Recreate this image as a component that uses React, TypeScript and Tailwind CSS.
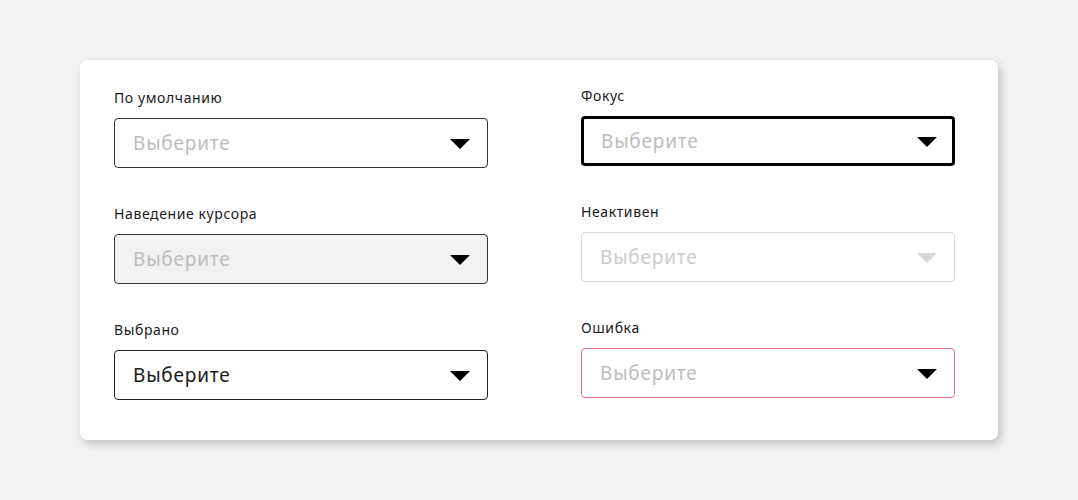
import React from "react";

type Variant = "default" | "focus" | "hover" | "disabled" | "selected" | "error";

const boxCls: Record<Variant, string> = {
  default: "border border-[#333333] bg-white",
  focus: "border-[3px] border-black bg-white",
  hover: "border border-[#333333] bg-[#f2f2f2]",
  disabled: "border border-[#d9d9d9] bg-white",
  selected: "border border-[#222222] bg-white",
  error: "border border-[#dc7882] bg-white",
};

const textCls: Record<Variant, string> = {
  default: "text-[#bdbdbd]",
  focus: "text-[#bdbdbd]",
  hover: "text-[#bdbdbd]",
  disabled: "text-[#cccccc]",
  selected: "text-[#1a1a1a]",
  error: "text-[#bdbdbd]",
};

function Field({ label, variant }: { label: string; variant: Variant }) {
  const arrow = variant === "disabled" ? "#d6d6d6" : "#000000";
  return (
    <div className="flex flex-col">
      <div className="h-[20px] text-[14px] tracking-[0.6px] leading-[20px] text-[#1a1a1a]">{label}</div>
      <div
        className={`mt-[10px] h-[50px] w-[374px] rounded-[4px] flex items-center justify-between ${boxCls[variant]} ${
          variant === "focus" ? "pl-[17px] pr-[15px]" : "pl-[18px] pr-[17px]"
        }`}
      >
        <span className={`text-[19px] tracking-[0.8px] ${textCls[variant]}`}>Выберите</span>
        <svg width="20" height="10" viewBox="0 0 20 10" className="mt-[1px]">
          <path d="M0 0 H20 L10 10 Z" fill={arrow} />
        </svg>
      </div>
    </div>
  );
}

export default function App() {
  return (
    <div
      className="w-[1078px] h-[500px] bg-[#f2f2f2] pt-[60px] pl-[80px]"
      style={{ fontFamily: '"Noto Sans", "DejaVu Sans", sans-serif' }}
    >
      <div className="w-[918px] h-[380px] bg-white rounded-[8px] shadow-[3px_4px_8px_rgba(0,0,0,0.2)] pl-[34px] flex gap-[93px]">
        <div className="pt-[28px] flex flex-col gap-[36px]">
          <Field label="По умолчанию" variant="default" />
          <Field label="Наведение курсора" variant="hover" />
          <Field label="Выбрано" variant="selected" />
        </div>
        <div className="pt-[26px] flex flex-col gap-[36px]">
          <Field label="Фокус" variant="focus" />
          <Field label="Неактивен" variant="disabled" />
          <Field label="Ошибка" variant="error" />
        </div>
      </div>
    </div>
  );
}
